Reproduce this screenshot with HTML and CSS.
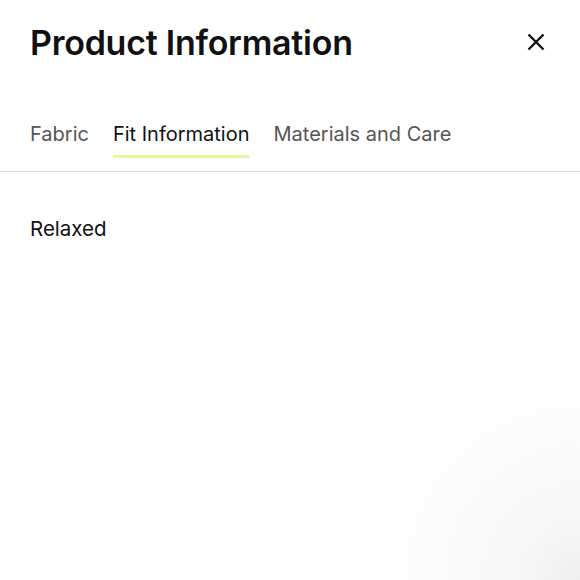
FILE: index.html
```html
<!DOCTYPE html>
<html lang="en">
<head>
    <meta charset="UTF-8">
    <meta name="viewport" content="width=device-width, initial-scale=1.0">
    <title>Product Information</title>
    <link rel="stylesheet" href="styles.css">
</head>
<body>
<div class="sheet">
    <!-- Header -->
    <div class="sheet__header">
        <h2 class="sheet__title">Product Information</h2>
        <button class="close" type="button" aria-label="Close">
            <svg width="20" height="20" viewBox="0 0 20 20">
                <path d="M2.5 2.5 L17.5 17.5 M17.5 2.5 L2.5 17.5" stroke="#111" stroke-width="2.4" fill="none"/>
            </svg>
        </button>
    </div>

    <!-- Tabs -->
    <div class="tabs">
        <button class="tab">Fabric</button>
        <button class="tab tab--active">Fit Information</button>
        <button class="tab">Materials and Care</button>
    </div>

    <div class="sheet__body">
        <p class="sheet__text">Relaxed</p>
    </div>
</div>
</body>
</html>
```

FILE: styles.css
```css
:root {
    /* COLORS */
    --black: #111;
    --gray: #555;
    --line: #dcdcdc;
    --lime: #e4f8a4;

    font-family: Inter, "Noto Sans", sans-serif;
}

html, body {
    height: 100%;
}

body {
    margin: 0;
    background-color: #fff;
    background-image: radial-gradient(circle at 100% 100%, #efefef 0, #f7f7f7 60px, #fdfdfd 180px, #fff 300px);
}

.sheet {
    height: 100%;
}

.sheet__header {
    align-items: center;
    display: flex;
    justify-content: space-between;
    padding: 20px 34px 0 30px;
    height: 44px;
}

.sheet__title {
    color: var(--black);
    font-size: 34px;
    font-weight: 600;
    letter-spacing: -0.25px;
    margin: 0;
}

.close {
    background: none;
    border: none;
    cursor: pointer;
    display: flex;
    padding: 0;
}

.tabs {
    border-bottom: 1px solid var(--line);
    display: flex;
    gap: 24px;
    margin-top: 58px;
    padding: 0 30px;
}

.tab {
    background: none;
    border: none;
    border-bottom: 3px solid transparent;
    color: var(--gray);
    cursor: pointer;
    font-family: inherit;
    font-size: 20px;
    margin-bottom: 13px;
    padding: 0 0 9px;
}

.tab--active {
    border-bottom-color: var(--lime);
    color: var(--black);
}

.sheet__body {
    padding: 0 30px;
}

.sheet__text {
    color: var(--black);
    font-size: 20.5px;
    margin: 44px 0 0;
}
```
